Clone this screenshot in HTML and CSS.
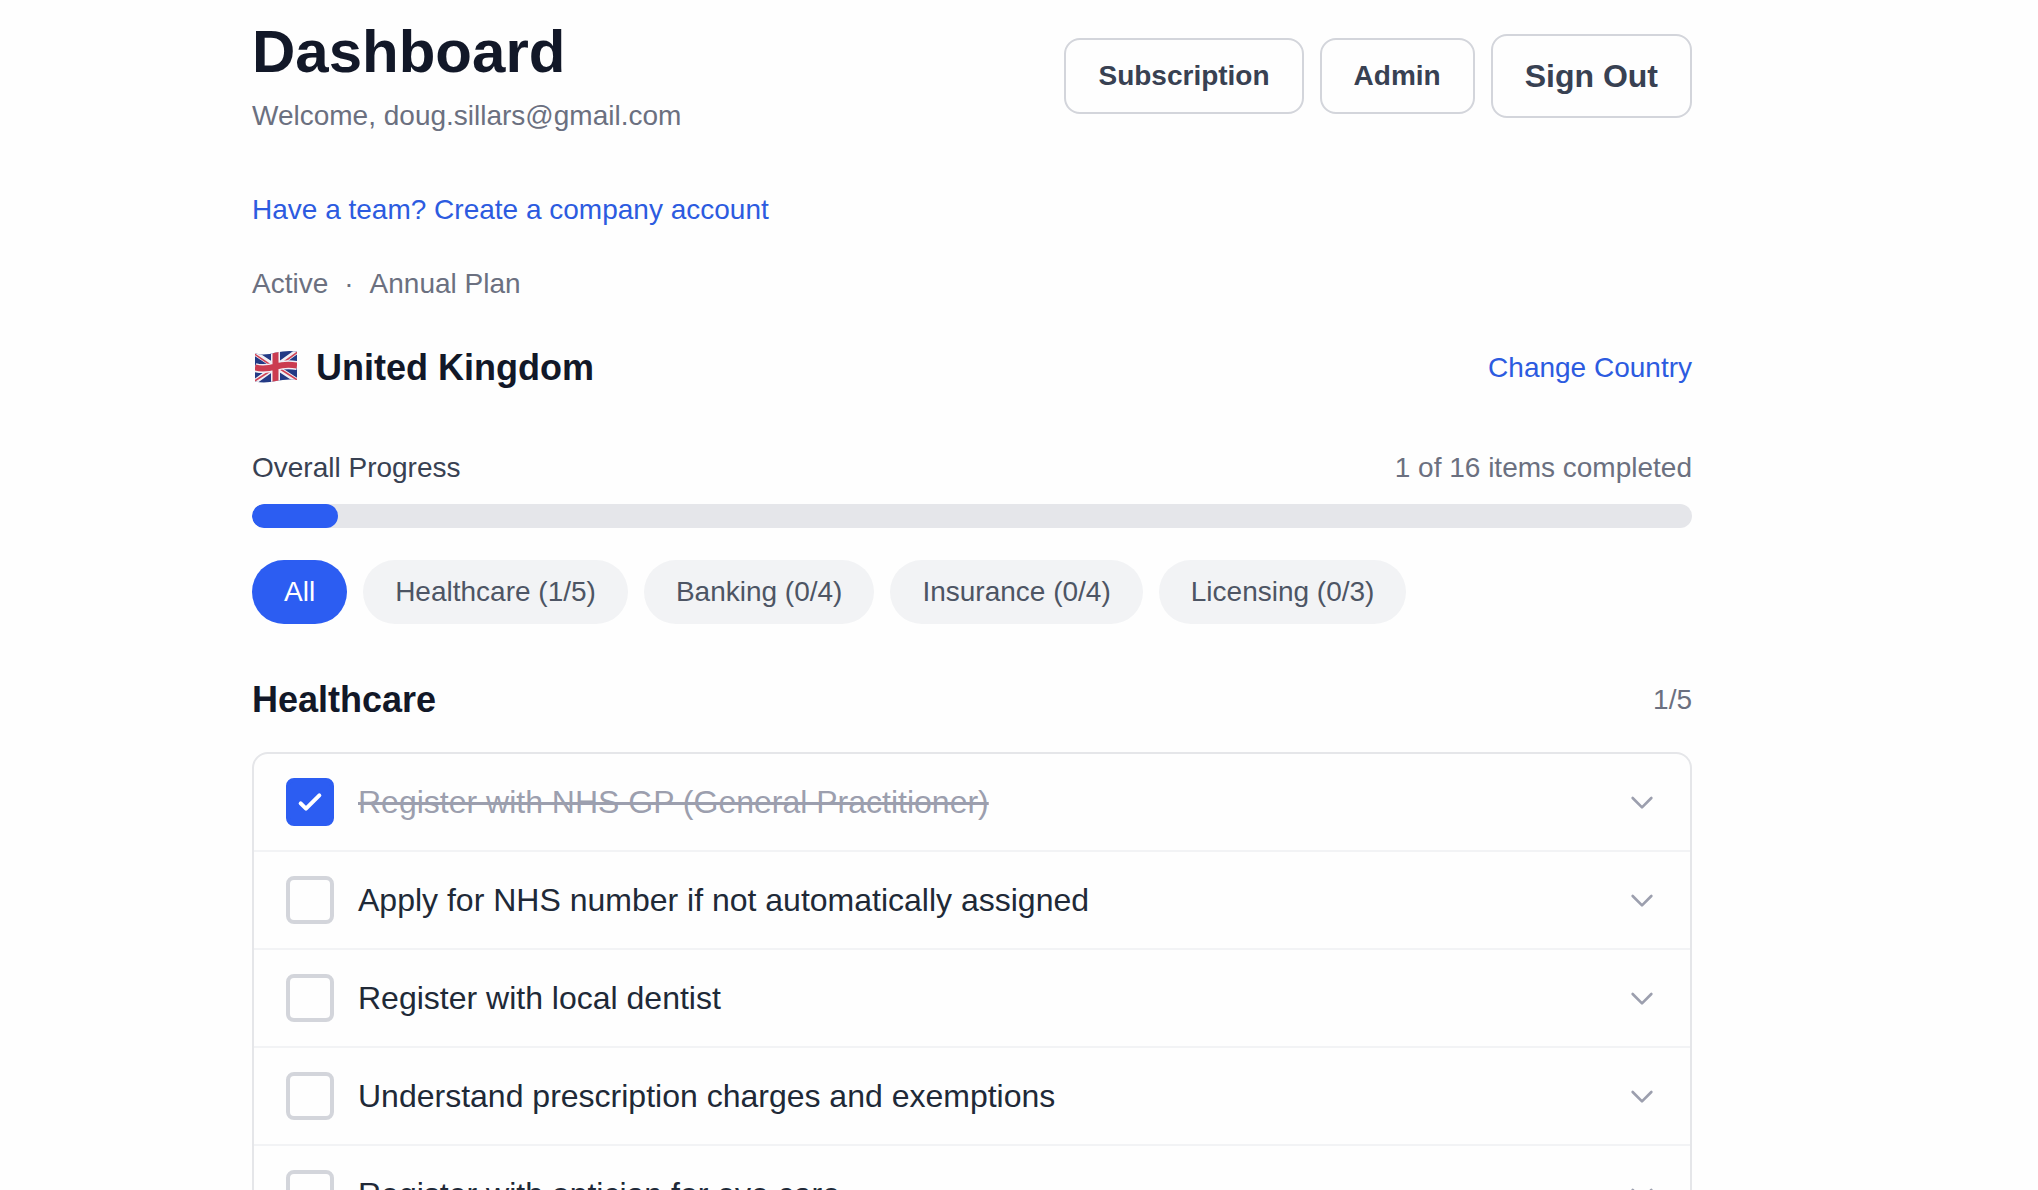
FILE: index.html
```
<!DOCTYPE html>
<html lang="en">
<head>
    <meta charset="UTF-8">
    <meta name="viewport" content="width=device-width, initial-scale=1.0">
    <title>Dashboard</title>
    <link rel="stylesheet" href="styles.css">
</head>
<body>
    <main class="page">
        <header class="header">
            <div>
                <h1>Dashboard</h1>
                <p class="welcome">Welcome, doug.sillars@gmail.com</p>
            </div>
            <div class="header-actions">
                <button type="button" class="btn">Subscription</button>
                <button type="button" class="btn">Admin</button>
                <button type="button" class="btn btn-large">Sign Out</button>
            </div>
        </header>

        <p class="team-link"><a href="#company">Have a team? Create a company account</a></p>

        <p class="plan">
            <span>Active</span>
            <span>·</span>
            <span>Annual Plan</span>
        </p>

        <section class="country">
            <div class="country-name">
                <svg class="flag" viewBox="0 0 48 48" aria-hidden="true">
                    <clipPath id="flag-shape">
                        <path d="M3 9 C10 12 17 10 24 8.500 S38 6.500 45 7.500 V36 C38 35 31 35.500 24 37 S10 39 3 37.500 Z"/>
                    </clipPath>
                    <g clip-path="url(#flag-shape)">
                        <rect width="48" height="48" fill="#233a85"/>
                        <path d="M1 8 L47 38 M1 39 L47 6" stroke="#f1eff5" stroke-width="5"/>
                        <path d="M1 9 L23 24 M25 23 L47 37 M1 38 L23 24 M25 23 L47 7" stroke="#cf4356" stroke-width="1.600"/>
                        <path d="M3 23.500 C10 25.500 17 24.500 24 22.500 S38 20.500 45 21.500 M23.500 5 V42" fill="none" stroke="#f1eff5" stroke-width="9"/>
                        <path d="M3 23.500 C10 25.500 17 24.500 24 22.500 S38 20.500 45 21.500 M23.500 5 V42" fill="none" stroke="#cb3c50" stroke-width="6"/>
                    </g>
                </svg>
                <h2>United Kingdom</h2>
            </div>
            <a href="#country">Change Country</a>
        </section>

        <section class="progress">
            <div class="progress-labels">
                <span id="progress-label">Overall Progress</span>
                <span class="muted">1 of 16 items completed</span>
            </div>
            <div class="progress-track" role="progressbar" aria-labelledby="progress-label" aria-valuenow="6" aria-valuemin="0" aria-valuemax="100">
                <div class="progress-fill" style="width: 6%"></div>
            </div>
        </section>

        <nav class="filters">
            <button type="button" class="pill active">All</button>
            <button type="button" class="pill">Healthcare (1/5)</button>
            <button type="button" class="pill">Banking (0/4)</button>
            <button type="button" class="pill">Insurance (0/4)</button>
            <button type="button" class="pill">Licensing (0/3)</button>
        </nav>

        <section>
            <div class="category-header">
                <h2>Healthcare</h2>
                <span class="muted">1/5</span>
            </div>
            <ul class="checklist">
                <li class="item">
                    <span class="check">
                        <input type="checkbox" id="item1" checked>
                        <svg viewBox="0 0 24 24" aria-hidden="true"><path d="M5 13l4 4L19 7"/></svg>
                    </span>
                    <label for="item1">Register with NHS GP (General Practitioner)</label>
                    <button type="button" class="expand" aria-label="Show details">
                        <svg viewBox="0 0 24 24" aria-hidden="true"><path d="M19 9l-7 7-7-7"/></svg>
                    </button>
                </li>
                <li class="item">
                    <span class="check"><input type="checkbox" id="item2"></span>
                    <label for="item2">Apply for NHS number if not automatically assigned</label>
                    <button type="button" class="expand" aria-label="Show details">
                        <svg viewBox="0 0 24 24" aria-hidden="true"><path d="M19 9l-7 7-7-7"/></svg>
                    </button>
                </li>
                <li class="item">
                    <span class="check"><input type="checkbox" id="item3"></span>
                    <label for="item3">Register with local dentist</label>
                    <button type="button" class="expand" aria-label="Show details">
                        <svg viewBox="0 0 24 24" aria-hidden="true"><path d="M19 9l-7 7-7-7"/></svg>
                    </button>
                </li>
                <li class="item">
                    <span class="check"><input type="checkbox" id="item4"></span>
                    <label for="item4">Understand prescription charges and exemptions</label>
                    <button type="button" class="expand" aria-label="Show details">
                        <svg viewBox="0 0 24 24" aria-hidden="true"><path d="M19 9l-7 7-7-7"/></svg>
                    </button>
                </li>
                <li class="item">
                    <span class="check"><input type="checkbox" id="item5"></span>
                    <label for="item5">Register with optician for eye care</label>
                    <button type="button" class="expand" aria-label="Show details">
                        <svg viewBox="0 0 24 24" aria-hidden="true"><path d="M19 9l-7 7-7-7"/></svg>
                    </button>
                </li>
            </ul>
        </section>
    </main>
</body>
</html>
```

FILE: styles.css
```
* {
    box-sizing: border-box;
    margin: 0;
    padding: 0;
}
body {
    padding-right: 94px;
    background: #fefefe;
    color: #121828;
    font-family: "Liberation Sans", Arial, sans-serif;
    font-size: 28px;
    line-height: 40px;
}
.page {
    max-width: 1536px;
    margin: 0 auto;
    padding: 16px 48px 48px;
}
h1 {
    font-size: 60px;
    line-height: 72px;
}
h2 {
    font-size: 36px;
    line-height: 56px;
}
a {
    color: #2c5be0;
    font-size: 28px;
    line-height: 40px;
    text-decoration: none;
}
button {
    font: inherit;
    cursor: pointer;
}
.muted,
.welcome,
.plan {
    color: #6b7080;
}

/* Header */
.header {
    display: flex;
    justify-content: space-between;
    align-items: center;
}
.welcome {
    margin-top: 8px;
}
.header-actions {
    display: flex;
    align-items: center;
    gap: 16px;
}
.btn {
    padding: 16px 32px;
    border: 2px solid #d3d5db;
    border-radius: 16px;
    background: #fefefe;
    color: #384152;
    font-weight: bold;
}
.btn-large {
    font-size: 32px;
    line-height: 48px;
}
.team-link {
    margin-top: 48px;
    font-size: 32px;
    line-height: 48px;
}
.plan {
    display: flex;
    gap: 16px;
    margin-top: 32px;
}

/* Country */
.country {
    display: flex;
    justify-content: space-between;
    align-items: center;
    margin-top: 32px;
}
.country-name {
    display: flex;
    align-items: center;
    gap: 16px;
    min-height: 64px;
}
.flag {
    width: 48px;
    height: 48px;
}

/* Progress */
.progress {
    margin-top: 48px;
}
.progress-labels {
    display: flex;
    justify-content: space-between;
    margin-bottom: 16px;
    color: #384152;
}
.progress-track {
    height: 24px;
    border-radius: 12px;
    background: #e5e6ea;
    overflow: hidden;
}
.progress-fill {
    height: 100%;
    border-radius: 12px;
    background: #2c5df2;
}

/* Filters */
.filters {
    display: flex;
    flex-wrap: wrap;
    gap: 16px;
    margin: 32px 0 48px;
}
.pill {
    padding: 12px 32px;
    border: none;
    border-radius: 32px;
    background: #f2f3f5;
    color: #4d5564;
}
.pill.active {
    background: #2c5df2;
    color: white;
}

/* Checklist */
.category-header {
    display: flex;
    justify-content: space-between;
    align-items: center;
    margin-bottom: 24px;
}
.checklist {
    border: 2px solid #e5e6e9;
    border-radius: 16px;
    list-style: none;
}
.item {
    display: flex;
    align-items: center;
    gap: 24px;
    padding: 24px 32px;
    color: #202937;
    font-size: 32px;
    line-height: 48px;
}
.item + .item {
    border-top: 2px solid #f2f3f5;
}
.item label {
    flex: 1;
}
.item:has(input:checked) label {
    color: #9c9fae;
    text-decoration: line-through;
}
.check {
    display: grid;
    place-items: center;
}
.check input,
.check svg {
    grid-area: 1 / 1;
}
.check input {
    appearance: none;
    width: 48px;
    height: 48px;
    border: 4px solid #d3d5db;
    border-radius: 8px;
}
.check input:checked {
    border-color: #2c5df2;
    background: #2c5df2;
}
.check svg,
.expand svg {
    display: block;
    width: 32px;
    height: 32px;
    fill: none;
    stroke-linecap: round;
    stroke-linejoin: round;
    pointer-events: none;
}
.check svg {
    stroke: white;
    stroke-width: 3;
}
.expand {
    border: none;
    background: none;
}
.expand svg {
    stroke: #9c9fae;
    stroke-width: 2;
}
```
